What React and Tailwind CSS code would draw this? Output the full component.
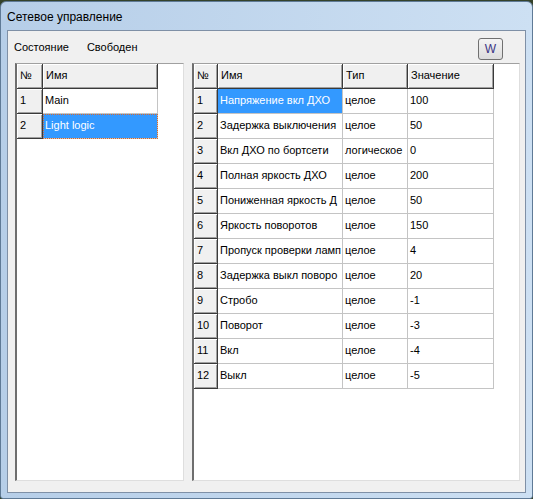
import React from 'react';

const leftRows = [
  { n: '1', name: 'Main' },
  { n: '2', name: 'Light logic', selected: true },
];

// names are cut to what fits in the column, as in the grid
const rightRows = [
  ['1', 'Напряжение вкл ДХО', 'целое', '100'],
  ['2', 'Задержка выключения', 'целое', '50'],
  ['3', 'Вкл ДХО по бортсети', 'логическое', '0'],
  ['4', 'Полная яркость ДХО', 'целое', '200'],
  ['5', 'Пониженная яркость Д', 'целое', '50'],
  ['6', 'Яркость поворотов', 'целое', '150'],
  ['7', 'Пропуск проверки ламп', 'целое', '4'],
  ['8', 'Задержка выкл поворо', 'целое', '20'],
  ['9', 'Стробо', 'целое', '-1'],
  ['10', 'Поворот', 'целое', '-3'],
  ['11', 'Вкл', 'целое', '-4'],
  ['12', 'Выкл', 'целое', '-5'],
];

// fixed (grey, raised) cell
const Fixed = ({ w, children }) => (
  <div
    className={`${w} h-[25px] shrink-0 overflow-hidden whitespace-nowrap bg-[#f0f0f0] border-r border-b border-[#3a3a3a] shadow-[inset_1px_1px_0_#ffffff,inset_-1px_-1px_0_#a0a0a0] pl-[3px] pt-[3px] leading-[16px]`}
  >
    {children}
  </div>
);

// normal data cell
const Cell = ({ w, selected, focus, children }) => (
  <div
    className={`${w} h-[25px] shrink-0 overflow-hidden whitespace-nowrap border-r border-b border-[#c4c4c4] pl-[2px] pt-[3px] leading-[16px] ${
      selected ? 'bg-[#3399ff] text-white' : 'bg-white'
    } ${focus ? 'outline-1 outline-dotted outline-[#d8692c] -outline-offset-1' : ''}`}
  >
    {children}
  </div>
);

const Box = ({ w, children }) => (
  <div
    className={`${w} h-[418px] shrink-0 bg-white border-l-2 border-l-[#6e6e6e] border-t border-t-[#a0a0a0] border-r border-r-[#dedede] border-b border-b-[#dedede] overflow-hidden`}
  >
    {children}
  </div>
);

export default function App() {
  return (
    <div className="w-[533px] h-[499px] bg-[#34422a] pt-[1px] font-['Liberation_Sans',Arial,sans-serif] text-[11px] text-black">
      <div className="h-[498px] rounded-t-[6px] rounded-b-[3px] border border-[#5f7a96] bg-gradient-to-r from-[#b6cee8] to-[#cde0f3] flex flex-col px-[6px] pb-[5px]">
        {/* title */}
        <div className="h-[28px] shrink-0 flex items-center pt-[1px] text-[12px] leading-none">
          Сетевое управление
        </div>

        {/* client area */}
        <div className="flex-1 border border-[#7f90a6] bg-[#f0f0f0] flex flex-col">
          <div className="h-[32px] shrink-0 flex items-start pl-[6px]">
            <span className="mt-[9px] leading-[14px]">Состояние</span>
            <span className="mt-[9px] ml-[18px] leading-[14px]">Свободен</span>
            <button className="ml-auto mr-[22px] mt-[7px] w-[25px] h-[22px] rounded-[3px] border border-[#707070] bg-gradient-to-b from-[#f4f4f4] to-[#dcdcdc] text-[12px] text-[#3a3585] leading-none">
              W
            </button>
          </div>

          <div className="flex pl-[7px] gap-[8px]">
            {/* left grid */}
            <Box w="w-[169px]">
              <div className="flex">
                <Fixed w="w-[26px]">№</Fixed>
                <Fixed w="w-[115px]">Имя</Fixed>
              </div>
              {leftRows.map((r) => (
                <div key={r.n} className="flex">
                  <Fixed w="w-[26px]">{r.n}</Fixed>
                  <Cell w="w-[115px]" selected={r.selected} focus={r.selected}>
                    {r.name}
                  </Cell>
                </div>
              ))}
            </Box>

            {/* right grid */}
            <Box w="w-[328px]">
              <div className="flex">
                <Fixed w="w-[24px]">№</Fixed>
                <Fixed w="w-[125px]">Имя</Fixed>
                <Fixed w="w-[65px]">Тип</Fixed>
                <Fixed w="w-[86px]">Значение</Fixed>
              </div>
              {rightRows.map(([n, name, type, val], i) => (
                <div key={n} className="flex">
                  <Fixed w="w-[24px]">{n}</Fixed>
                  <Cell w="w-[125px]" selected={i === 0}>
                    {name}
                  </Cell>
                  <Cell w="w-[65px]">{type}</Cell>
                  <Cell w="w-[86px]">{val}</Cell>
                </div>
              ))}
            </Box>
          </div>
        </div>
      </div>
    </div>
  );
}
